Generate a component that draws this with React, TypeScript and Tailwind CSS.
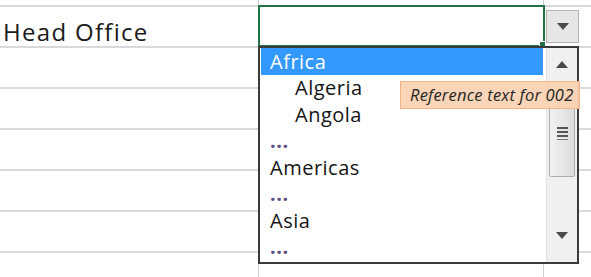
const rows = ["Head Office", "", "", "", "", "", ""];

const items = [
  { label: "Africa", indent: false, selected: true },
  { label: "Algeria", indent: true },
  { label: "Angola", indent: true },
  { label: "...", dots: true },
  { label: "Americas" },
  { label: "...", dots: true },
  { label: "Asia" },
  { label: "...", dots: true },
];

function Tri({ up }: { up?: boolean }) {
  return (
    <svg width="12" height="7" viewBox="0 0 12 7">
      <polygon points={up ? "0,7 12,7 6,0" : "0,0 12,0 6,7"} fill="#4a4a4a" />
    </svg>
  );
}

export default function App() {
  return (
    <div
      className="relative w-[591px] h-[277px] overflow-hidden bg-white"
      style={{ fontFamily: '"Open Sans", "Noto Sans", sans-serif' }}
    >
      {/* sheet grid */}
      <div className="flex flex-col">
        <div className="flex h-[7px] border-b-2 border-[#d9d9d9]">
          <div className="w-[259px] border-r border-[#cfcfcf]" />
          <div className="w-[285px] border-r border-[#cfcfcf]" />
          <div className="flex-1" />
        </div>
        {rows.map((r, i) => (
          <div key={i} className="flex h-[41px] border-b-2 border-[#d9d9d9]">
            <div className="w-[259px] border-r border-[#cfcfcf] pl-[3px] pt-[7px] text-[24px] tracking-[1.3px] text-[#1a1a1a] font-medium leading-normal">
              {r}
            </div>
            <div className="w-[285px] border-r border-[#cfcfcf]" />
            <div className="flex-1" />
          </div>
        ))}
      </div>

      {/* active cell */}
      <div className="absolute left-[258px] top-[5px] w-[287px] h-[42px] border-2 border-[#217346]" />
      <div className="absolute left-[539px] top-[41px] w-[7px] h-[6px] bg-[#217346] border border-white" />

      {/* dropdown button */}
      <div className="absolute left-[546px] top-[10px] w-[33px] h-[33px] bg-[#e6e6e6] border border-[#b4b4b4] flex items-center justify-center">
        <Tri />
      </div>

      {/* list box */}
      <div className="absolute left-[258px] top-[46px] w-[321px] h-[218px] border-2 border-[#3a3a3a] bg-white flex">
        <div className="flex-1 flex flex-col">
          {items.map((it, i) => (
            <div
              key={i}
              className={`h-[26.5px] leading-[24px] pt-[1.7px] text-[20px] tracking-[0.5px] whitespace-nowrap ${
                it.selected
                  ? "bg-[#3399ff] text-white ml-[1px] mr-[3px] pl-[9px]"
                  : it.dots
                    ? "text-[#5e4a7e] pl-[10px] tracking-[-0.5px] font-bold"
                    : "text-[#141414] font-medium pl-[10px]"
              } ${it.indent ? "pl-[35px]" : ""}`}
            >
              {it.label}
            </div>
          ))}
        </div>
        <div className="w-[31px] bg-[#f0f0f0] border-l border-[#e3e3e3] flex flex-col items-center">
          <div className="h-[32px] flex items-center justify-center pt-[1px]">
            <Tri up />
          </div>
          <div className="mt-[10px] w-[26px] h-[87px] rounded-[2px] border border-[#acacac] bg-gradient-to-r from-[#f2f2f2] to-[#dcdcdc] flex flex-col items-center justify-center gap-[2px]">
            <div className="w-[11px] h-[2px] bg-[#555]" />
            <div className="w-[11px] h-[2px] bg-[#555]" />
            <div className="w-[11px] h-[2px] bg-[#555]" />
            <div className="w-[11px] h-[1px] bg-[#777]" />
          </div>
          <div className="flex-1" />
          <div className="h-[38px] flex items-start justify-center pt-[8px]">
            <Tri />
          </div>
        </div>
      </div>

      {/* hover tooltip */}
      <div className="absolute left-[400px] top-[81px] w-[180px] h-[28px] bg-[#fbd3b3]/95 border border-[#f4b488] pl-[9px] flex items-center text-[16.5px] tracking-[0.2px] italic text-[#262626] whitespace-nowrap">
        Reference text for 002
      </div>
    </div>
  );
}
